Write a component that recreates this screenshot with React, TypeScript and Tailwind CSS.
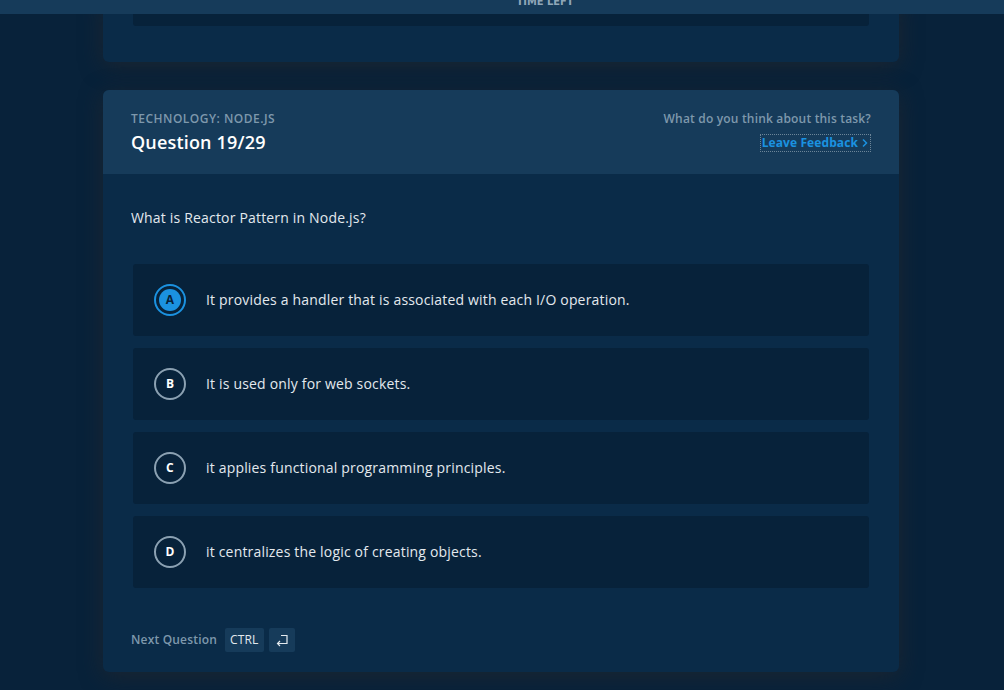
import React from 'react';

const options = [
    { key: 'A', text: 'It provides a handler that is associated with each I/O operation.', selected: true },
    { key: 'B', text: 'It is used only for web sockets.', selected: false },
    { key: 'C', text: 'it applies functional programming principles.', selected: false },
    { key: 'D', text: 'it centralizes the logic of creating objects.', selected: false },
];

const font = { fontFamily: '"Open Sans", "Noto Sans", sans-serif' };

function OptionRow({ opt }: { opt: (typeof options)[number] }) {
    return (
        <div className="flex h-[72px] items-center rounded-[3px] bg-[#07223a] pl-[21px]">
            {opt.selected ? (
                <div className="flex h-[32px] w-[32px] items-center justify-center rounded-full border-2 border-[#1b92e0]">
                    <div className="flex h-[22px] w-[22px] items-center justify-center rounded-full bg-[#1b92e0] text-[12px] font-bold text-[#07223a]">
                        {opt.key}
                    </div>
                </div>
            ) : (
                <div className="flex h-[32px] w-[32px] items-center justify-center rounded-full border-2 border-[#8ba1b2] text-[12px] font-bold text-white">
                    {opt.key}
                </div>
            )}
            <span className="ml-[20px] mt-[-1px] text-[14px] text-[#e3e9ee]">{opt.text}</span>
        </div>
    );
}

export default function App() {
    return (
        <div className="relative h-[690px] w-full overflow-hidden bg-[#08223a] tracking-[0.18px]" style={font}>
            {/* fixed top bar */}
            <div className="absolute left-0 right-0 top-0 z-10 flex h-[14px] justify-center overflow-hidden bg-[#163b5a] pl-[86px]">
                <span
                    className="mt-[-6px] text-[11px] font-bold tracking-[0px] text-[#8fa6b8]"
                    style={{ fontFamily: '"DejaVu Sans Condensed", "Liberation Sans Narrow", sans-serif' }}
                >
                    TIME LEFT
                </span>
            </div>

            <div className="ml-[103px] w-[796px]">
                {/* previous card tail */}
                <div className="h-[62px] rounded-b-[6px] bg-[#0a2b48] px-[30px] shadow-[0_4px_22px_rgba(30,38,48,0.9)]">
                    <div className="h-[26px] rounded-b-[3px] bg-[#07223a]" />
                </div>

                {/* question card */}
                <div className="mt-[28px] overflow-hidden rounded-[6px] bg-[#0a2b48] shadow-[0_4px_22px_rgba(30,38,48,0.9)]">
                    <div className="flex h-[84px] items-start justify-between bg-[#163b5a] px-[28px] pt-[21px]">
                        <div>
                            <div className="text-[12px] font-semibold uppercase leading-[16px] tracking-[0.04em] text-[#7e98ac]">
                                Technology: Node.js
                            </div>
                            <div className="mt-[3px] text-[18px] font-semibold leading-[24px] text-white">Question 19/29</div>
                        </div>
                        <div className="flex flex-col items-end">
                            <div className="text-[12px] font-semibold leading-[16px] text-[#7e98ac]">
                                What do you think about this task?
                            </div>
                            <div className="mt-[7px] flex items-center gap-[3px] border border-dotted border-[#6c8598] px-[1px] text-[12px] font-bold leading-[16px] tracking-[0.1px] text-[#1b92e0]">
                                Leave Feedback
                                <svg width="8" height="10" viewBox="0 0 8 10" fill="none">
                                    <path d="M2 1.5L5.5 5L2 8.5" stroke="#1b92e0" strokeWidth="1.5" />
                                </svg>
                            </div>
                        </div>
                    </div>

                    <div className="px-[30px] pb-[20px] pt-[34px]">
                        <p className="ml-[-2px] text-[14px] leading-[20px] text-[#e3e9ee]">What is Reactor Pattern in Node.js?</p>
                        <div className="mt-[36px] flex flex-col gap-[12px]">
                            {options.map((opt) => (
                                <OptionRow key={opt.key} opt={opt} />
                            ))}
                        </div>
                        <div className="ml-[-2px] mt-[40px] flex items-center">
                            <span className="text-[12px] font-semibold text-[#7e98ac]">Next Question</span>
                            <span className="ml-[8px] flex h-[24px] items-center rounded-[2px] bg-[#163b5a] px-[5px] text-[12px] text-[#e3e9ee]">
                                CTRL
                            </span>
                            <span className="ml-[5px] flex h-[24px] w-[26px] items-center justify-center rounded-[2px] bg-[#163b5a]">
                                <svg width="14" height="14" viewBox="0 0 14 14" fill="none">
                                    <path d="M6 2.5H12V10.5H2.5" stroke="#e3e9ee" strokeWidth="1.2" />
                                    <path d="M5 8L2.5 10.5L5 13" stroke="#e3e9ee" strokeWidth="1.2" />
                                </svg>
                            </span>
                        </div>
                    </div>
                </div>
            </div>
        </div>
    );
}
